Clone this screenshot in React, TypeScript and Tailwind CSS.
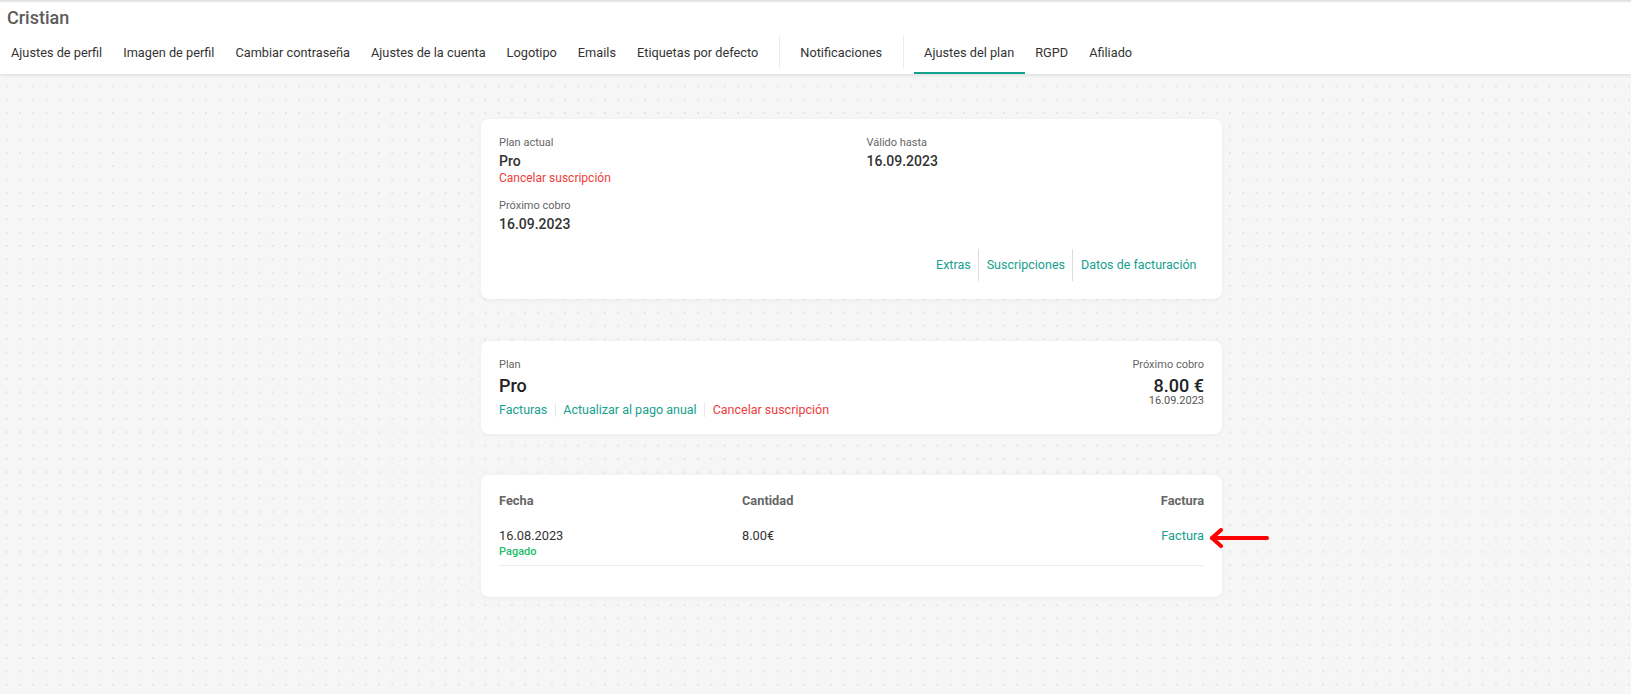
const tabsA = [
  "Ajustes de perfil",
  "Imagen de perfil",
  "Cambiar contraseña",
  "Ajustes de la cuenta",
  "Logotipo",
  "Emails",
  "Etiquetas por defecto",
];

function Tab({ label, active = false }: { label: string; active?: boolean }) {
  return (
    <div
      className={
        "h-[38px] px-[10.5px] pb-[3px] flex items-center border-b-2 " +
        (active ? "border-[#13a08f]" : "border-transparent")
      }
    >
      <span className="text-[12.75px] text-[#333]">{label}</span>
    </div>
  );
}

function Sep() {
  return <div className="self-start w-px h-[32px] bg-[#ebebeb] mx-[10px]" />;
}

function Card({ children, className = "" }: { children: React.ReactNode; className?: string }) {
  return (
    <div
      className={
        "ml-[481px] w-[741px] bg-white rounded-lg shadow-[0_1px_5px_rgba(0,0,0,0.05)] px-[18px] " + className
      }
    >
      {children}
    </div>
  );
}

export default function App() {
  return (
    <div
      className="min-h-screen bg-[#f6f6f6] bg-[radial-gradient(circle,#e4e4e4_1px,transparent_1.3px)] bg-[length:13.3px_13.3px] pb-10"
      style={{ fontFamily: "Roboto, 'Noto Sans', sans-serif" }}
    >
      {/* header */}
      <header className="bg-white shadow-[0_1px_4px_rgba(0,0,0,0.12)] pt-[6px] relative">
        <div className="absolute inset-x-0 top-0 h-[3px] bg-gradient-to-b from-[#d9d9d9] to-transparent" />
        <h1 className="pl-[7px] text-[18px] leading-[24px] font-medium text-[#5c5c5c]">Cristian</h1>
        <nav className="mt-[6px] flex pl-[0.5px]">
          {tabsA.map((t) => (
            <Tab key={t} label={t} />
          ))}
          <Sep />
          <Tab label="Notificaciones" />
          <Sep />
          <Tab label="Ajustes del plan" active />
          <Tab label="RGPD" />
          <Tab label="Afiliado" />
        </nav>
      </header>

      {/* plan summary */}
      <Card className="mt-[45px] pt-[16px] pb-[18px]">
        <div className="grid grid-cols-2 gap-x-[30px]">
          <div>
            <div className="text-[11px] leading-[16px] text-[#666]">Plan actual</div>
            <div className="mt-[1px] text-[14px] leading-[18px] font-medium text-[#333]">Pro</div>
            <div className="text-[12px] leading-[16px] text-[#ee3d3d]">Cancelar suscripción</div>
            <div className="mt-[12px] text-[11px] leading-[16px] text-[#666]">Próximo cobro</div>
            <div className="mt-[1px] text-[14px] leading-[18px] font-medium text-[#333]">16.09.2023</div>
          </div>
          <div>
            <div className="text-[11px] leading-[16px] text-[#666]">Válido hasta</div>
            <div className="mt-[1px] text-[14px] leading-[18px] font-medium text-[#333]">16.09.2023</div>
          </div>
        </div>
        <div className="mt-[16px] flex justify-end text-[12.5px] text-[#16a08e]">
          <span className="h-[32px] flex items-center px-[7.5px]">Extras</span>
          <span className="h-[32px] flex items-center px-[7.5px] border-l border-[#dcdcdc]">Suscripciones</span>
          <span className="h-[32px] flex items-center px-[7.5px] border-l border-[#dcdcdc]">Datos de facturación</span>
        </div>
      </Card>

      {/* plan */}
      <Card className="mt-[42px] pt-[16px] pb-[15px]">
        <div className="flex justify-between">
          <div>
            <div className="text-[11px] leading-[16px] text-[#666]">Plan</div>
            <div className="mt-[1px] text-[18px] leading-[24px] font-medium text-[#222]">Pro</div>
            <div className="mt-[3px] flex items-center text-[12.5px] leading-[18px]">
              <span className="text-[#16a08e]">Facturas</span>
              <span className="w-px h-[14px] bg-[#e8e8e8] mx-[7.5px]" />
              <span className="text-[#16a08e]">Actualizar al pago anual</span>
              <span className="w-px h-[14px] bg-[#e8e8e8] mx-[7.5px]" />
              <span className="text-[#ee3d3d]">Cancelar suscripción</span>
            </div>
          </div>
          <div className="text-right">
            <div className="text-[11px] leading-[16px] text-[#666]">Próximo cobro</div>
            <div className="mt-[4px] text-[18px] leading-[18px] font-medium text-[#222]">8.00 €</div>
            <div className="text-[11px] leading-[11px] text-[#555]">16.09.2023</div>
          </div>
        </div>
      </Card>

      {/* invoices */}
      <Card className="mt-[41px] pt-[17px] pb-[31px]">
        <div className="grid grid-cols-[243px_1fr_auto] text-[12.8px] leading-[18px]">
          <div className="font-bold text-[#666]">Fecha</div>
          <div className="font-bold text-[#666]">Cantidad</div>
          <div className="font-bold text-[#666] text-right">Factura</div>
        </div>
        <div className="mt-[17px] pb-[7px] border-b border-[#ececec] grid grid-cols-[243px_1fr_auto] text-[12.8px] leading-[18px]">
          <div>
            <div className="text-[#333]">16.08.2023</div>
            <div className="mt-[1px] text-[11px] leading-[12px] font-medium text-[#22bd68]">Pagado</div>
          </div>
          <div className="text-[#333]">8.00€</div>
          <div className="relative text-right">
            <span className="text-[#16a08e]">Factura</span>
            <svg
              className="absolute left-full top-[1px] ml-[4px]"
              width="62"
              height="20"
              viewBox="0 0 62 20"
              fill="none"
              stroke="#ff0000"
              strokeWidth="4"
              strokeLinecap="round"
              strokeLinejoin="round"
            >
              <path d="M4 10 H59" />
              <path d="M13 2 L4 10 L13 18" />
            </svg>
          </div>
        </div>
      </Card>
    </div>
  );
}
